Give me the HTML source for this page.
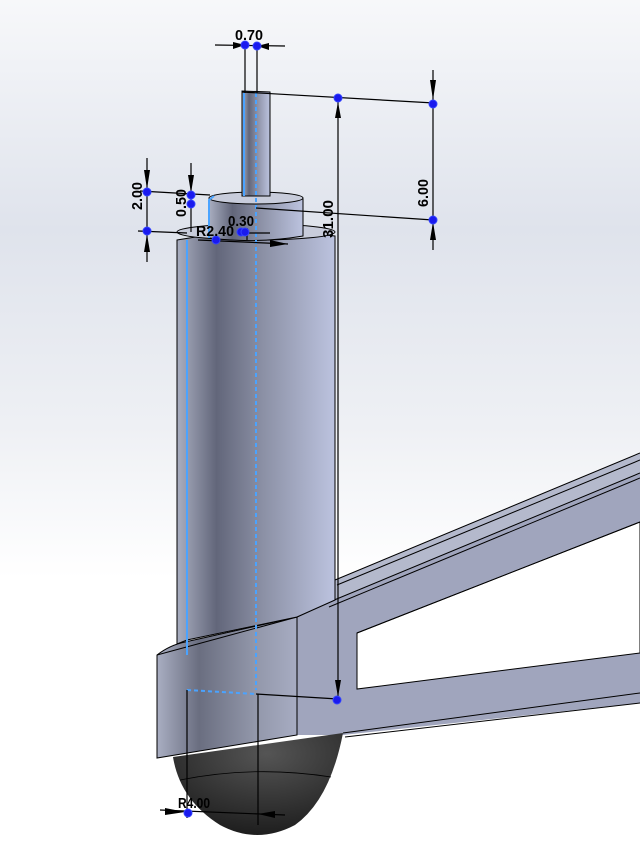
<!DOCTYPE html>
<html><head><meta charset="utf-8"><style>
html,body{margin:0;padding:0;width:640px;height:850px;overflow:hidden}
svg{display:block}
text{font-family:"Liberation Sans",sans-serif;font-weight:bold;font-size:15px;fill:#000}
</style></head><body>
<svg width="640" height="850" viewBox="0 0 640 850" xmlns="http://www.w3.org/2000/svg">
<defs>
<linearGradient id="bg" x1="0" y1="0" x2="0" y2="1">
<stop offset="0" stop-color="#f7f8fa"/><stop offset="0.27" stop-color="#dfe3ec"/>
<stop offset="0.5" stop-color="#eef0f4"/><stop offset="0.68" stop-color="#ffffff"/><stop offset="1" stop-color="#ffffff"/>
</linearGradient>
<linearGradient id="cyl" x1="0" y1="0" x2="1" y2="0">
<stop offset="0" stop-color="#a9aec0"/><stop offset="0.25" stop-color="#62667a"/>
<stop offset="0.55" stop-color="#8c91a6"/><stop offset="1" stop-color="#bcc3df"/>
</linearGradient>
<linearGradient id="plate" x1="0" y1="0" x2="1" y2="0">
<stop offset="0" stop-color="#a9aec2"/><stop offset="0.3" stop-color="#6a6e80"/>
<stop offset="0.7" stop-color="#9297aa"/><stop offset="1" stop-color="#a7acc2"/>
</linearGradient>
<radialGradient id="dome" cx="0.55" cy="0.2" r="0.8">
<stop offset="0" stop-color="#555"/><stop offset="1" stop-color="#1e1e1e"/>
</radialGradient>
</defs>
<rect width="640" height="850" fill="url(#bg)"/>
<!-- right partial object -->
<path d="M640,555 Q626,575 624,605 L624,650 L640,650 Z" fill="#b5bacd" stroke="#000" stroke-width="0.8"/>
<!-- arm -->
<path d="M297,617 L335,600 L335,580 L640,453 L640,703 L343,735 L297,735 Z" fill="#a0a5bd"/>
<path d="M335,580 L640,453 L640,473 L335,600 Z" fill="#b4b9cc"/>
<path d="M357,633 L640,522 L640,653 L357,689 Z" fill="#ffffff" stroke="#000" stroke-width="1"/>
<path d="M335,580 L640,453 M337,585 L640,460 M327,603 L640,473 M329,607 L640,478 M357,633 L640,522 M343,733 L640,693 M345,737 L640,703 M297,617 L327,603" stroke="#000" stroke-width="1" fill="none"/>
<!-- dome -->
<path d="M173,757 Q180,800 220,825 Q257,845 295,825 Q330,800 343,733 Z" fill="url(#dome)"/>
<path d="M180,780 Q255,765 331,777" stroke="#000" stroke-width="0.8" fill="none"/>
<!-- plate -->
<path d="M157,655 Q170,645 185,642 L297,617 L297,735 L157,758 Z" fill="url(#plate)" stroke="#000" stroke-width="1"/>
<path d="M157,655 L297,617" stroke="#000" stroke-width="1"/>
<!-- main cylinder -->
<path d="M177,240 Q256,226 335,236 L335,600 L297,617 L187,640 L177,644 Z" fill="url(#cyl)" stroke="#000" stroke-width="1"/>
<ellipse cx="256" cy="232" rx="79" ry="8" fill="#c8ccdb" stroke="#000" stroke-width="1"/>
<!-- collar -->
<path d="M209,199 L209,238 Q256,244 303,236 L303,199 Z" fill="url(#cyl)" stroke="#000" stroke-width="1"/>
<ellipse cx="256" cy="198" rx="47" ry="6" fill="#c8ccdb" stroke="#000" stroke-width="1"/>
<!-- pin -->
<path d="M242,91 L270,92 L270,196 L242,196 Z" fill="url(#cyl)" stroke="#000" stroke-width="1"/>
<!-- sketch blue lines -->
<g stroke="#4aa3ff" stroke-width="2" fill="none">
<path d="M187,240 L187,655 M244,93 L244,196 M214,196 L209,200 L209,238"/>
<path d="M256,93 L256,690 M187,690 L256,694" stroke-dasharray="4,3"/>
</g>
<!-- dimension lines -->
<g stroke="#000" stroke-width="1.2" fill="none">
<path d="M215,45 L285,46 M245,45 L245,93 M257,46 L257,93"/>
<path d="M242,92 L434,103 M433,70 L433,250 M256,208 L433,220 M338,98 L338,700 M256,694 L338,699"/>
<path d="M147,158 L147,262 M140,191 L210,195 M138,231 L187,233 M191,163 L191,232 M198,240 L288,244 M247,228 L247,240 M245,233 L270,233"/>
<path d="M187,690 L187,818 M258,694 L258,825 M160,810 L285,815"/>
</g>
<g fill="#000">
<path d="M233,42 L245,45 L233,49 Z M269,43 L257,46 L269,50 Z"/>
<path d="M430,80 L433,100 L436,80 Z M430,240 L433,222 L436,240 Z"/>
<path d="M335,118 L338,102 L341,118 Z M335,680 L338,697 L341,680 Z"/>
<path d="M144,170 L147,189 L150,170 Z M144,252 L147,234 L150,252 Z M188,175 L191,193 L194,175 Z"/>
<path d="M270,240 L288,244 L270,247 Z"/>
<path d="M165,808 L185,812 L165,815 Z M275,811 L258,814 L275,818 Z"/>
</g>
<g fill="#1a1aee" stroke="#3344ff" stroke-width="1">
<circle cx="245" cy="45" r="4"/><circle cx="257" cy="46" r="4"/>
<circle cx="338" cy="98" r="4"/><circle cx="433" cy="104" r="4"/><circle cx="433" cy="220" r="4"/>
<circle cx="147" cy="192" r="4"/><circle cx="147" cy="231" r="4"/>
<circle cx="191" cy="195" r="4"/><circle cx="191" cy="204" r="4"/>
<circle cx="216" cy="240" r="4"/><circle cx="241" cy="232" r="4"/><circle cx="245" cy="232" r="4"/>
<circle cx="337" cy="700" r="4"/><circle cx="188" cy="813" r="4"/>
</g>
<text x="235" y="40" textLength="28" lengthAdjust="spacingAndGlyphs">0.70</text>
<text x="196" y="236" textLength="38" lengthAdjust="spacingAndGlyphs">R2.40</text>
<text x="228" y="226" textLength="26" lengthAdjust="spacingAndGlyphs">0.30</text>
<text x="178" y="808" textLength="32" lengthAdjust="spacingAndGlyphs">R4.00</text>
<text transform="translate(142,210) rotate(-90)" textLength="28" lengthAdjust="spacingAndGlyphs">2.00</text>
<text transform="translate(186,217) rotate(-90)" textLength="28" lengthAdjust="spacingAndGlyphs">0.50</text>
<text transform="translate(333,238) rotate(-90)" textLength="38" lengthAdjust="spacingAndGlyphs">31.00</text>
<text transform="translate(428,207) rotate(-90)" textLength="28" lengthAdjust="spacingAndGlyphs">6.00</text>
</svg>
</body></html>
